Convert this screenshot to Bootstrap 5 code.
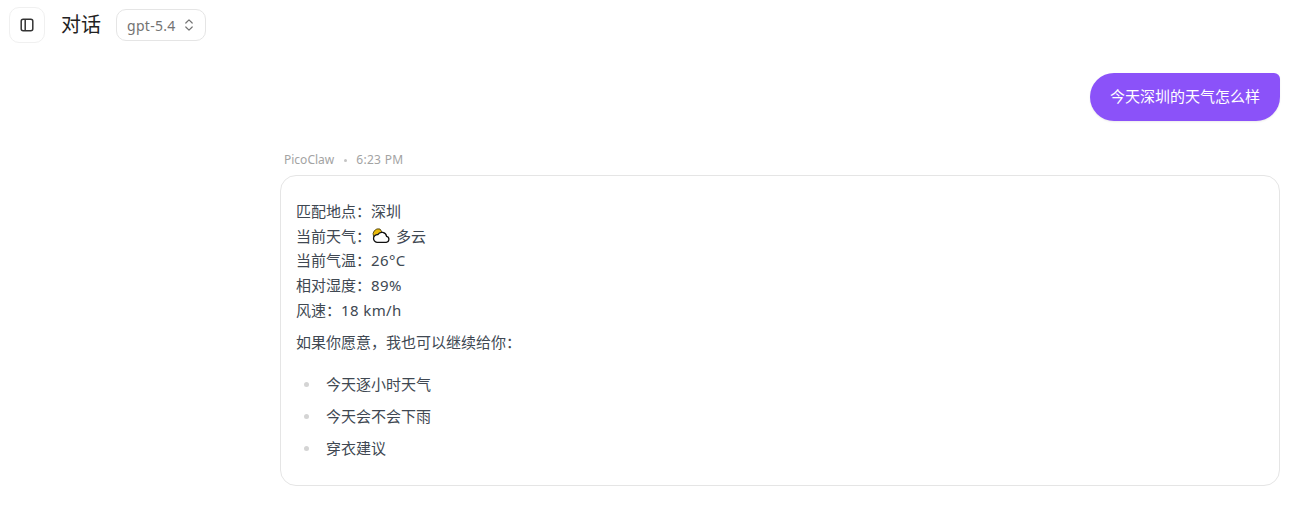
<!doctype html>
<html lang="zh-CN">
<head>
<meta charset="utf-8">
<title>对话</title>
<link href="https://cdn.jsdelivr.net/npm/bootstrap@5.3.3/dist/css/bootstrap.min.css" rel="stylesheet">
<style>
  html, body { height: 100%; overflow: hidden; }
  body { font-family: "Noto Sans", "Noto Sans CJK SC", sans-serif; background: #fff; color: #404852; font-size: 15px; }
  .top-bar { padding: 7px 9px 0; height: 49px; gap: 16px; }
  .side-btn { width: 36px; height: 36px; border: 1px solid #f0f0f0; border-radius: 10px; background: #fff; color: #333; padding: 0; }
  .page-title { font-size: 20px; color: #222; font-weight: 400; margin: 0; line-height: 36px; }
  .model-pick { height: 32px; width: 90px; border: 1px solid #e5e5e5; border-radius: 10px; background: #fff; color: #737373; font-size: 14px; padding: 0 10px; margin-top: 2px; margin-left: -1px; letter-spacing: .3px; }
  .chat-area { padding: 24px 24px 0 280px; }
  .user-bubble { background: #8b52f9; color: #fff; font-size: 15px; line-height: 24px; padding: 11px 20px 13px; border-radius: 24px 6px 24px 24px; box-shadow: 0 1px 2px rgba(0,0,0,.08); }
  .msg-meta { margin-top: 31px; padding-left: 4px; font-size: 12px; line-height: 16px; color: #a3a3a3; gap: 9.5px; height: 16px; }
  .meta-time { letter-spacing: .3px; }
  .meta-dot { width: 3px; height: 3px; border-radius: 50%; background: #c4c4c4; }
  .reply-card { margin-top: 7px; border: 1px solid #e5e5e5; border-radius: 16px; padding: 22.8px 15px 24px; height: 311px; line-height: 24.75px; }
  .reply-line { display: block; }
  .latin-val { letter-spacing: .4px; }
  .reply-card p { margin: 0; }
  .reply-follow { margin-top: 7px !important; }
  .reply-list { list-style: none; margin: 14px 0 0; padding: 0; }
  .reply-list li { position: relative; padding-left: 30px; height: 32px; line-height: 32px; }
  .reply-list li::before { content: ""; position: absolute; left: 8px; top: 14px; width: 5px; height: 5px; border-radius: 50%; background: #d4d4d4; }
  .weather-ico { vertical-align: -2px; margin: 0 2px 0 1px; }
</style>
</head>
<body>
  <header class="top-bar d-flex align-items-start">
    <button class="side-btn d-flex align-items-center justify-content-center" type="button" aria-label="切换侧栏">
      <svg width="16" height="16" viewBox="0 0 16 16" fill="none" stroke="currentColor" stroke-width="1.5"><rect x="2.2" y="2.2" width="11.6" height="11.6" rx="2"/><path d="M6.2 2.2v11.6"/></svg>
    </button>
    <h1 class="page-title">对话</h1>
    <button class="model-pick d-flex align-items-center justify-content-between" type="button">
      <span>gpt-5.4</span>
      <svg width="12" height="14" viewBox="0 0 12 14" fill="none" stroke="currentColor" stroke-width="1.2" stroke-linecap="round" stroke-linejoin="round"><path d="M2.8 5 6 1.8 9.2 5M2.8 9 6 12.2 9.2 9"/></svg>
    </button>
  </header>
  <main class="chat-area">
    <div class="d-flex justify-content-end">
      <div class="user-bubble">今天深圳的天气怎么样</div>
    </div>
    <div class="msg-meta d-flex align-items-center">
      <span>PicoClaw</span><span class="meta-dot"></span><span class="meta-time">6:23 PM</span>
    </div>
    <div class="reply-card">
      <p>
        <span class="reply-line">匹配地点：深圳</span>
        <span class="reply-line">当前天气：<svg class="weather-ico" width="18" height="16" viewBox="0 0 18 16"><path d="M1.6 8.5A5.4 5.4 0 0 1 8 1l2.2 3.4-5 5z" fill="#e8b90c" stroke="#3a3000" stroke-width=".8"/><path d="M5 14.3h9.2a3 3 0 0 0 .4-5.9A4.8 4.8 0 0 0 5.8 6.6 3.85 3.85 0 0 0 5 14.3z" fill="#fff" stroke="#111" stroke-width="1.3"/></svg> 多云</span>
        <span class="reply-line">当前气温：<span class="latin-val">26°C</span></span>
        <span class="reply-line">相对湿度：<span class="latin-val">89%</span></span>
        <span class="reply-line">风速：<span class="latin-val">18 km/h</span></span>
      </p>
      <p class="reply-follow">如果你愿意，我也可以继续给你：</p>
      <ul class="reply-list">
        <li>今天逐小时天气</li>
        <li>今天会不会下雨</li>
        <li>穿衣建议</li>
      </ul>
    </div>
  </main>
  <script src="https://cdn.jsdelivr.net/npm/bootstrap@5.3.3/dist/js/bootstrap.bundle.min.js"></script>
</body>
</html>
